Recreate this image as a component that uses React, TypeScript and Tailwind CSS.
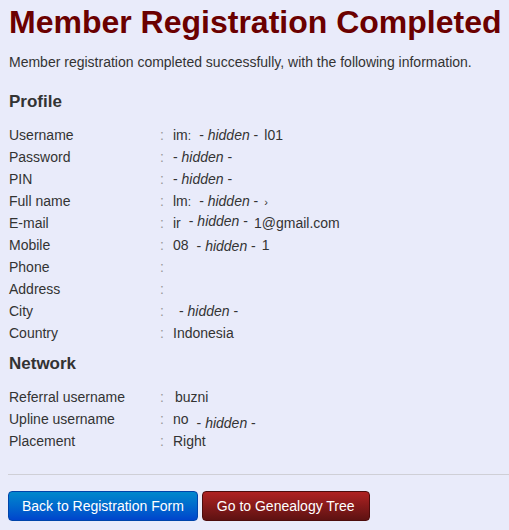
import type { ReactNode } from "react";

function Hidden(props: { ml?: string; shift?: string }) {
  return (
    <span className={`inline-block ${props.ml ?? ""} ${props.shift ?? ""}`}>
      - <i>hidden</i> -
    </span>
  );
}

function Row(props: { label: string; children?: ReactNode }) {
  return (
    <div className="flex h-[22px] items-center leading-[22px]">
      <div className="w-[151px] shrink-0">{props.label}</div>
      <div className="w-[13px] shrink-0 text-[#999]">:</div>
      <div className="whitespace-nowrap">{props.children}</div>
    </div>
  );
}

function Heading(props: { children: ReactNode; className?: string }) {
  return (
    <h4 className={`text-[17px] font-bold leading-[24px] text-[#333] ${props.className ?? ""}`}>
      {props.children}
    </h4>
  );
}

export default function App() {
  return (
    <div
      className="min-h-[530px] overflow-hidden bg-[#e9ebfa] px-[9px] text-[14px] text-[#333]"
      style={{ fontFamily: '"Liberation Sans", Arial, sans-serif' }}
    >
      <h1 className="text-[32px] font-bold leading-[44px] text-[#6b0000] whitespace-nowrap">
        Member Registration Completed
      </h1>
      <p className="mt-2 leading-[20px]">
        Member registration completed successfully, with the following information.
      </p>

      <Heading className="mt-[18px]">Profile</Heading>
      <div className="mt-[10px]">
        <Row label="Username">
          im<span className="text-[12px]">:</span>
          <Hidden ml="ml-[8px]" />
          <span className="ml-[6px]">l01</span>
        </Row>
        <Row label="Password">
          <Hidden />
        </Row>
        <Row label="PIN">
          <Hidden />
        </Row>
        <Row label="Full name">
          lm<span className="text-[12px]">:</span>
          <Hidden ml="ml-[8px]" />
          <span className="ml-[6px] text-[11px]">›</span>
        </Row>
        <Row label="E-mail">
          ir
          <Hidden ml="ml-[8px]" shift="-translate-y-[2px]" />
          <span className="ml-[6px]">1@gmail.com</span>
        </Row>
        <Row label="Mobile">
          08
          <Hidden ml="ml-[8px]" shift="translate-y-[1px]" />
          <span className="ml-[6px]">1</span>
        </Row>
        <Row label="Phone" />
        <Row label="Address" />
        <Row label="City">
          <Hidden ml="ml-[6px]" />
        </Row>
        <Row label="Country">Indonesia</Row>
      </div>

      <Heading className="mt-2">Network</Heading>
      <div className="mt-[10px]">
        <Row label="Referral username">
          <span className="ml-[2px]">buzni</span>
        </Row>
        <Row label="Upline username">
          no
          <Hidden ml="ml-[8px]" shift="translate-y-[4px]" />
        </Row>
        <Row label="Placement">Right</Row>
      </div>

      <hr className="mt-[22px] -ml-px -mr-[9px] border-t border-[#cfcfd6]" />

      <div className="mt-4 flex gap-[4px] -ml-px">
        <button className="h-[30px] rounded-[4px] border border-[#0044aa] bg-gradient-to-b from-[#0088cc] to-[#0044cc] px-[13px] text-[14px] text-white">
          Back to Registration Form
        </button>
        <button className="h-[30px] rounded-[4px] border border-[#4d0c0c] bg-gradient-to-b from-[#b02222] to-[#5e1212] px-[14px] text-[14px] text-white">
          Go to Genealogy Tree
        </button>
      </div>
    </div>
  );
}
